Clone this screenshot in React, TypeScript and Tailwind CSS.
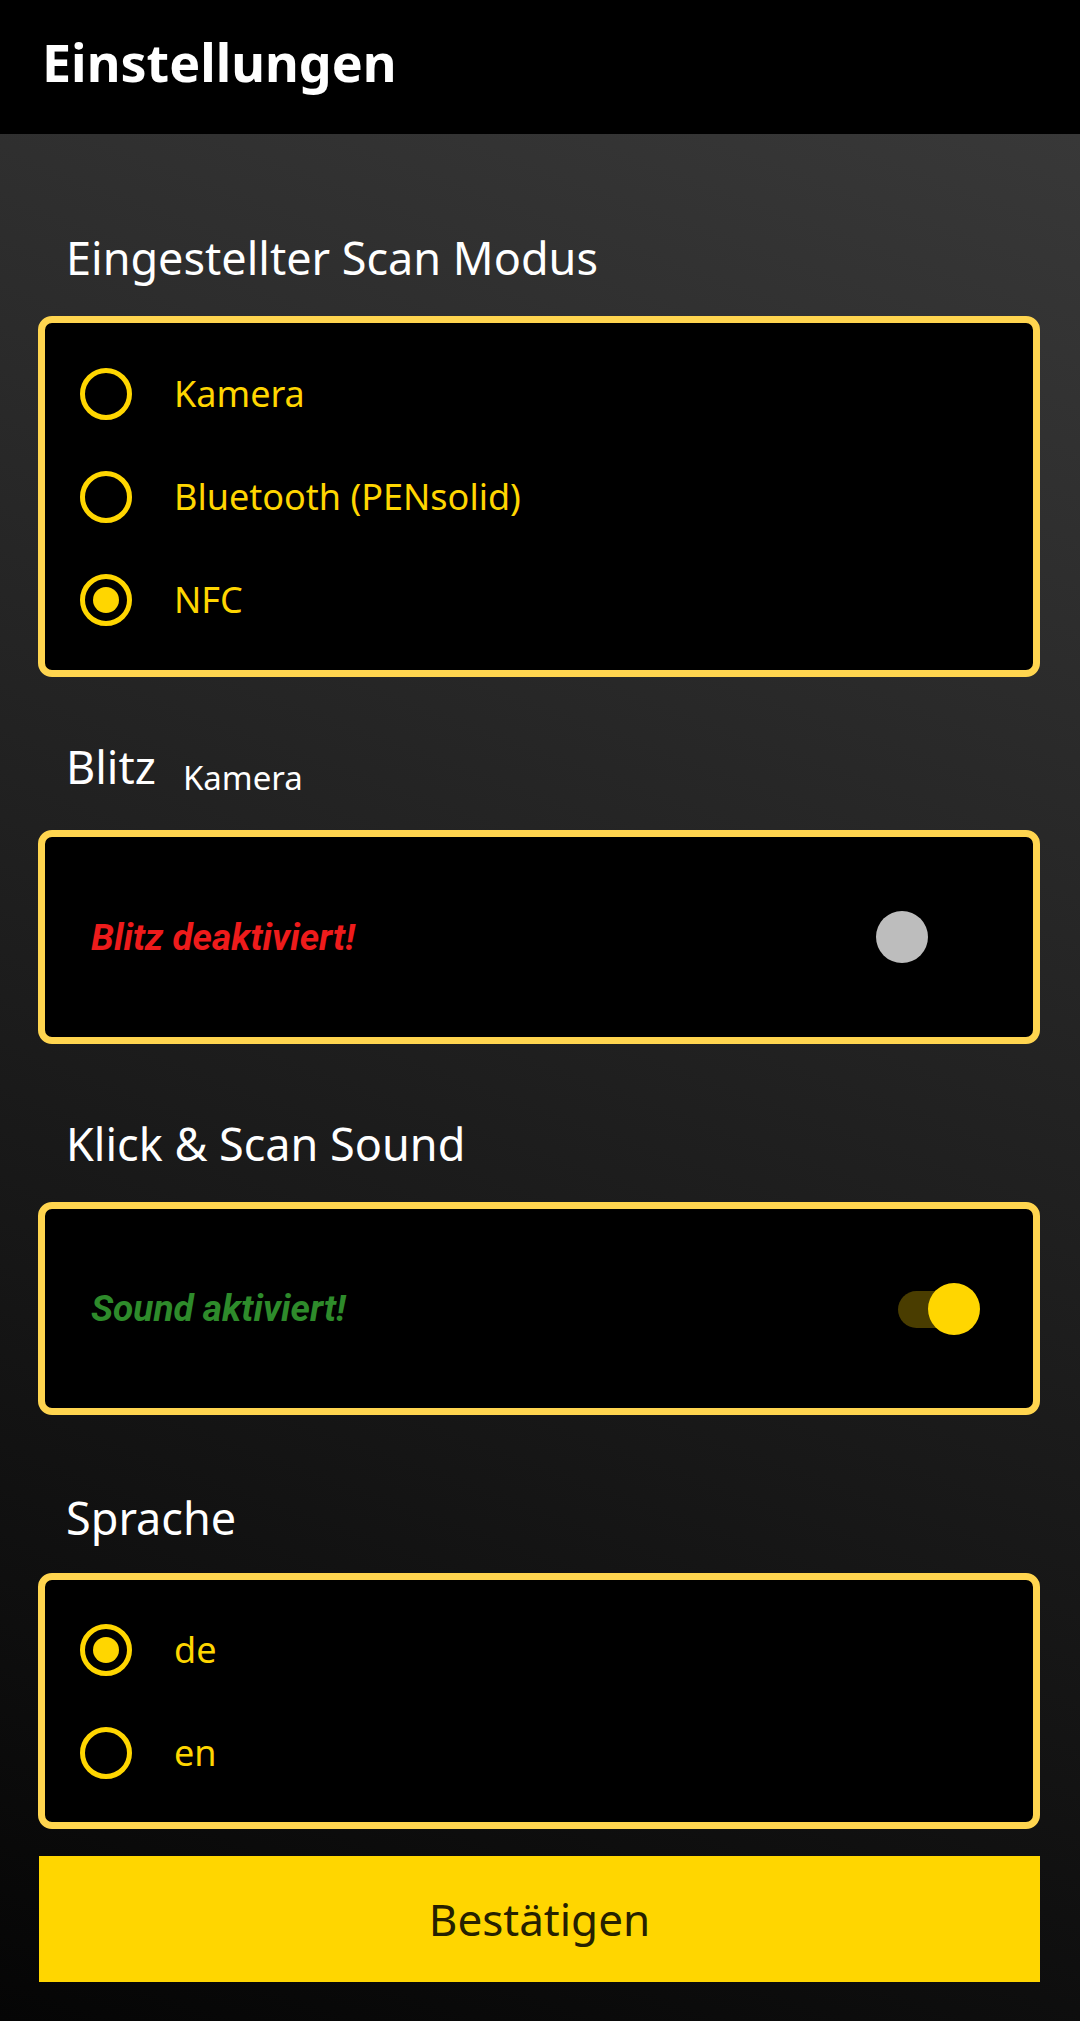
import { useState } from "react";

type RadioProps = {
  label: string,
  checked: boolean,
  onClick: () => void
}

function Radio({ label, checked, onClick }: RadioProps) {
  return (
    <button onClick={onClick} className="flex items-center h-[103px] w-full text-left pl-[35px]">
      <span className="flex items-center justify-center w-[52px] h-[52px] rounded-full border-[5px] border-[#ffd600] shrink-0">
        {checked && <span className="w-[26px] h-[26px] rounded-full bg-[#ffd600]" />}
      </span>
      <span className="ml-[42px] text-[36px] leading-none text-[#ffd600] font-['Noto_Sans',sans-serif]">{label}</span>
    </button>
  )
}

type SwitchProps = {
  on: boolean,
  onClick: () => void
}

function Switch({ on, onClick }: SwitchProps) {
  return (
    <button onClick={onClick} className="relative w-[104px] h-[52px] shrink-0">
      <span className={on ? "absolute left-[22px] top-[8px] h-[37px] w-[74px] rounded-full bg-[#4a3d00]" : "absolute left-[22px] top-[8px] h-[37px] w-[74px] rounded-full bg-transparent"} />
      <span className={on ? "absolute top-0 left-[52px] h-[52px] w-[52px] rounded-full bg-[#ffd600]" : "absolute top-0 left-0 h-[52px] w-[52px] rounded-full bg-[#bdbdbd]"} />
    </button>
  )
}

const heading = "ml-[28px] text-[45px] leading-none text-white font-['Noto_Sans',sans-serif]";
const box = "w-full rounded-[14px] border-[7px] border-[#ffd54f] bg-black";

export default function App() {
  const [mode, setMode] = useState("NFC");
  const [flash, setFlash] = useState(false);
  const [sound, setSound] = useState(true);
  const [lang, setLang] = useState("de");

  return (
    <div className="w-[1080px] min-h-[2021px] flex flex-col bg-black">
      <div className="h-[134px] bg-black pl-[42px] pt-[36px] shrink-0">
        <h1 className="text-[52px] leading-none font-bold text-white font-['Noto_Sans',sans-serif]">Einstellungen</h1>
      </div>

      <div className="flex-1 flex flex-col pl-[38px] pr-[40px] pt-[101px] pb-[39px] bg-[linear-gradient(200deg,#383838,#050505)]">
        <h2 className={heading}>Eingestellter Scan Modus</h2>
        <div className={box + " mt-[36px] py-[19px]"}>
          {["Kamera", "Bluetooth (PENsolid)", "NFC"].map(m => (
            <Radio key={m} label={m} checked={mode === m} onClick={() => setMode(m)} />
          ))}
        </div>

        <div className="flex items-start mt-[67px]">
          <h2 className={heading}>Blitz</h2>
          <span className="ml-[27px] mt-[17px] text-[33px] leading-none text-white font-['Noto_Sans',sans-serif]">Kamera</span>
        </div>
        <div className={box + " mt-[36px] h-[214px] flex items-center justify-between pl-[46px] pr-[53px]"}>
          <p className="text-[37px] leading-none font-bold italic text-[#ee1b1b] font-['Roboto',sans-serif]">
            {flash ? "Blitz aktiviert!" : "Blitz deaktiviert!"}
          </p>
          <Switch on={flash} onClick={() => setFlash(!flash)} />
        </div>

        <h2 className={heading + " mt-[77px]"}>Klick &amp; Scan Sound</h2>
        <div className={box + " mt-[36px] h-[213px] flex items-center justify-between pl-[46px] pr-[53px]"}>
          <p className="text-[37px] leading-none font-bold italic text-[#2e8b2b] font-['Roboto',sans-serif]">
            {sound ? "Sound aktiviert!" : "Sound deaktiviert!"}
          </p>
          <Switch on={sound} onClick={() => setSound(!sound)} />
        </div>

        <h2 className={heading + " mt-[80px]"}>Sprache</h2>
        <div className={box + " mt-[33px] py-[18px]"}>
          {["de", "en"].map(l => (
            <Radio key={l} label={l} checked={lang === l} onClick={() => setLang(l)} />
          ))}
        </div>

        <button className="mt-[27px] ml-[1px] h-[126px] w-[1001px] bg-[#ffd600] text-[44px] leading-none text-[#262100] font-['Noto_Sans',sans-serif]">
          Bestätigen
        </button>
      </div>
    </div>
  )
}
